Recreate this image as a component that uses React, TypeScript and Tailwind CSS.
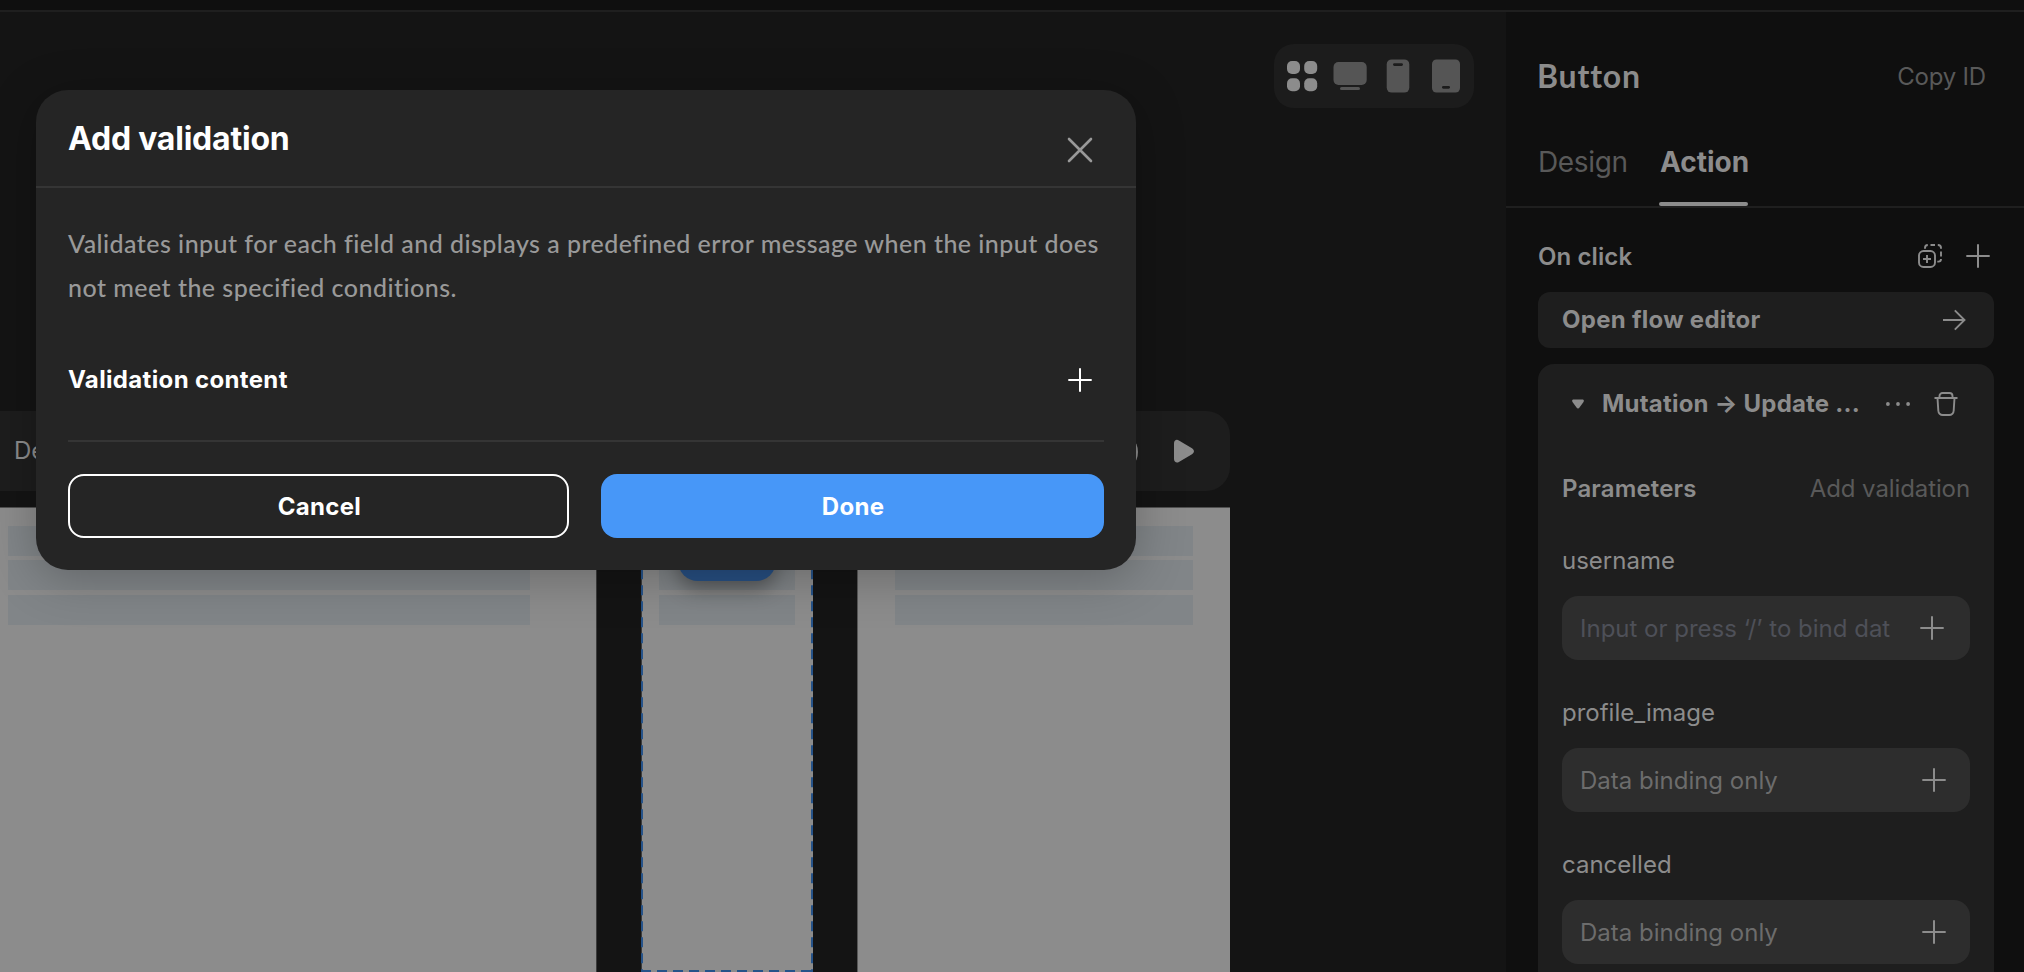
import React from "react";

function Plus({ className = "" }: { className?: string }) {
  return (
    <svg viewBox="0 0 24 24" className={`size-6 shrink-0 ${className}`} fill="none" stroke="currentColor" strokeWidth="2">
      <path d="M12 0.3v23.4M0.3 12h23.4" />
    </svg>
  );
}

function ViewSwitcher() {
  return (
    <div className="flex h-16 w-[200px] items-center gap-4 rounded-[20px] bg-[#1c1c1c] px-3 text-[#555555]">
      <svg viewBox="0 0 32 32" className="size-8 text-[#8c8c8c]" fill="currentColor">
        <rect x="1" y="1" width="13" height="13" rx="5" />
        <rect x="18.2" y="1" width="13" height="13" rx="5" />
        <rect x="1" y="18.2" width="13" height="13" rx="5" />
        <rect x="18.2" y="18.2" width="13" height="13" rx="5" />
      </svg>
      <svg viewBox="0 0 32 32" className="size-8 overflow-visible" fill="currentColor">
        <rect x="-0.5" y="2" width="33.2" height="23" rx="5" />
        <rect x="6" y="27" width="20" height="3" rx="1.5" />
      </svg>
      <svg viewBox="0 0 32 32" className="size-8 overflow-visible" fill="currentColor">
        <rect x="4.7" y="-0.6" width="22.6" height="33.2" rx="5" />
        <rect x="11" y="3.2" width="10" height="2.8" rx="1.4" fill="#1c1c1c" />
      </svg>
      <svg viewBox="0 0 32 32" className="size-8 overflow-visible" fill="currentColor">
        <rect x="2" y="-0.6" width="28" height="33.2" rx="4.5" />
        <rect x="12" y="26" width="8" height="2.7" rx="1.35" fill="#1c1c1c" />
      </svg>
    </div>
  );
}

function Stripes() {
  return (
    <div className="flex flex-col gap-[4.6px]">
      <div className="h-[29.8px] bg-[#818588]" />
      <div className="h-[29.8px] bg-[#818588]" />
      <div className="h-[29.8px] bg-[#818588]" />
    </div>
  );
}

function Canvas() {
  return (
    <main className="flex min-w-0 flex-1 flex-col bg-[#141414]">
      <div className="flex justify-end pt-8 pr-8">
        <ViewSwitcher />
      </div>
      <div className="mt-[303px] flex h-20 w-[1230px] shrink-0 items-center rounded-r-3xl bg-[#1d1d1d] pr-[34px] pl-[14px] text-[#8c8c8c]">
        <span className="text-2xl">Desktop</span>
        <svg viewBox="0 0 40 40" className="ml-auto size-10" fill="currentColor">
          <circle cx="20" cy="21" r="20" />
        </svg>
        <svg viewBox="0 0 24 24" className="ml-[34px] size-6" fill="currentColor">
          <path d="M2 4.4C2 1.2 4.6 0 6.9 1.4L20 9.200c2.600 1.600 2.600 4.400 0 6L6.900 23C4.600 24.400 2 23 2 20Z" />
        </svg>
      </div>
      <div className="mt-4 flex h-[465px] shrink-0">
        <div className="w-[597px] border-t border-r border-t-[#505050] border-r-[#3c3c3c] bg-[#8c8c8c] pt-[18px] pr-[66px] pl-2">
          <Stripes />
        </div>
        <div className="relative ml-[44px] w-[172px] border-t border-t-[#505050] border-l border-l-[#3c3c3c] bg-[#8c8c8c] pt-[18px] pr-[18px] pl-[17px]">
          <Stripes />
          <div className="absolute top-[9px] left-[36px] h-16 w-[98px] rounded-[20px] bg-[#274f82] shadow-[0_8px_20px_rgba(0,0,0,0.35)]" />
          <svg viewBox="0 0 172 465" className="absolute top-[-1px] left-[-1px] h-[465px] w-[172px] overflow-visible" stroke="#265389" strokeWidth="2" strokeDasharray="10 6">
            <path d="M1 62.300V465" />
            <path d="M171 62.300V465" />
            <path d="M0 464H172" />
          </svg>
        </div>
        <div className="ml-[44px] w-[373px] border-t border-l border-t-[#505050] border-l-[#585858] bg-[#8c8c8c] pt-[18px] pr-[37px] pl-[37px]">
          <Stripes />
        </div>
      </div>
    </main>
  );
}

function Field({ label, placeholder, input }: { label: string; placeholder: string; input?: boolean }) {
  return (
    <div className="flex flex-col">
      <div className="h-16 text-2xl leading-[58px]">{label}</div>
      <div className={input
        ? "flex h-16 items-center justify-between rounded-2xl bg-[#2d2d2d] pr-[26px] pl-[18px] text-2xl text-[#4e5058]"
        : "flex h-16 items-center justify-between rounded-2xl bg-[#2d2d2d] pr-6 pl-[18px] text-2xl text-[#6c6c6c]"}>
        <span className="pt-0.5 whitespace-nowrap">{placeholder}</span>
        <Plus className="text-[#8c8c8c]" />
      </div>
    </div>
  );
}

function Sidebar() {
  return (
    <aside className="flex w-[518px] shrink-0 flex-col overflow-hidden bg-[#0f0f0f] text-[#8c8c8c]">
      <div className="flex h-32 shrink-0 items-center justify-between pr-[38px] pl-[31px]">
        <h2 className="font-['Lato'] text-[32px] font-bold tracking-[0.8px]">Button</h2>
        <span className="pt-0.5 text-2xl tracking-[-0.2px] text-[#595959]">Copy ID</span>
      </div>
      <div className="flex h-[68px] shrink-0 gap-8 border-b-2 border-[#1f1f1f] pl-8 text-[28px] leading-[44px]">
        <span className="w-[89px] tracking-[-0.35px] text-[#595959]">Design</span>
        <div className="flex w-[89px] flex-col justify-between font-bold">
          <span className="pl-px">Action</span>
          <span className="h-1 rounded-full bg-[#8c8c8c]" />
        </div>
      </div>
      <div className="flex min-h-0 flex-1 flex-col pr-[30px] pl-8">
        <div className="flex h-[84px] shrink-0 items-center pt-3 pr-1">
          <span className="pt-0.5 text-2xl font-semibold tracking-[0.1px]">On click</span>
          <svg viewBox="0 0 24 24" className="ml-auto size-6" fill="none" stroke="currentColor" strokeWidth="1.9">
            <rect x="1" y="7" width="16" height="16" rx="4.5" />
            <path d="M9 11v8M5 15h8" />
            <path d="M7 4.700V4a3 3 0 0 1 2.800-3M12.500 1h4.500M19.800 1H20a3 3 0 0 1 3 3v0.700M23 7.500v5M23 15v0a2.600 2.600 0 0 1-2.600 2.600H19.300" />
          </svg>
          <Plus className="ml-6" />
        </div>
        <div className="flex h-14 shrink-0 items-center justify-between rounded-xl bg-[#1e1e1e] pr-7 pl-6">
          <span className="text-2xl font-bold tracking-[0.28px]">Open flow editor</span>
          <svg viewBox="0 0 24 24" className="size-6" fill="none" stroke="currentColor" strokeWidth="1.900">
            <path d="M1 12h21.500M12.800 2.400L22.500 12L12.800 21.600" />
          </svg>
        </div>
        <section className="mt-4 shrink-0 rounded-2xl bg-[#1e1e1e] px-6">
          <div className="flex h-20 items-center pr-3 pl-[10px]">
            <svg viewBox="0 0 12 10" className="h-[10px] w-3" fill="currentColor">
              <path d="M1.500 0.500H10.500C11.800 0.500 12.300 1.900 11.500 2.900L7.500 8.500C6.700 9.700 5.300 9.700 4.500 8.500L0.500 2.900C-0.300 1.900 0.200 0.500 1.500 0.500Z" />
            </svg>
            <span className="ml-[18px] text-2xl font-bold tracking-[0.2px] whitespace-nowrap">Mutation → Update ...</span>
            <svg viewBox="0 0 24 24" className="ml-auto size-6" fill="currentColor">
              <circle cx="1.900" cy="12" r="1.900" />
              <circle cx="12" cy="12" r="1.900" />
              <circle cx="22.100" cy="12" r="1.900" />
            </svg>
            <svg viewBox="0 0 24 24" className="ml-6 size-6" fill="none" stroke="currentColor" strokeWidth="1.900">
              <path d="M0.500 6H23.500M5.500 6V4a3 3 0 0 1 3-3h7a3 3 0 0 1 3 3v2M3.500 6l0.800 12.600A4.500 4.500 0 0 0 8.800 23h6.400a4.500 4.500 0 0 0 4.500-4.400L20.500 6" />
            </svg>
          </div>
          <div className="flex h-[88px] items-center justify-between pt-0.5 text-2xl">
            <span className="font-semibold tracking-[0.15px]">Parameters</span>
            <span className="tracking-[-0.1px] text-[#595959]">Add validation</span>
          </div>
          <div className="flex flex-col gap-6">
            <Field label="username" placeholder="Input or press ‘/’ to bind dat" input />
            <Field label="profile_image" placeholder="Data binding only" />
            <Field label="cancelled" placeholder="Data binding only" />
          </div>
          <div className="h-10" />
        </section>
      </div>
    </aside>
  );
}

function ValidationDialog() {
  return (
    <div role="dialog" className="absolute top-[90px] left-9 flex h-[480px] w-[1100px] flex-col rounded-[32px] bg-[#252525] text-white shadow-[0_8px_48px_rgba(0,0,0,0.25)]">
      <header className="flex h-[98px] items-center justify-between border-b-2 border-[#353535] px-8">
        <h1 className="pt-0.5 text-[32px] font-bold tracking-[-0.22px]">Add validation</h1>
        <svg viewBox="0 0 48 48" className="mt-6 size-12" fill="none" stroke="#999999" strokeWidth="2.600" strokeLinecap="round">
          <path d="M13 13L35 35M35 13L13 35" />
        </svg>
      </header>
      <div className="flex flex-1 flex-col px-8 pt-8">
        <p className="pt-px font-['Lato'] text-[25px] leading-[44px] font-medium tracking-[0.46px] whitespace-nowrap text-[#999999]">
          Validates input for each field and displays a predefined error message when the input does
          <br />
          not meet the specified conditions.
        </p>
        <div className="mt-[23px] flex h-24 items-center justify-between pr-3">
          <span className="text-2xl font-bold tracking-[0.35px]">Validation content</span>
          <Plus />
        </div>
        <div className="mt-3 h-0.5 bg-[#353535]" />
        <div className="mt-8 flex gap-8 text-2xl font-bold tracking-[0.3px]">
          <button className="h-16 w-[501px] rounded-2xl border-2 border-white pt-0.5 pl-0.5">Cancel</button>
          <button className="h-16 w-[503px] rounded-2xl bg-[#4797f8] pt-0.5 pl-px">Done</button>
        </div>
      </div>
    </div>
  );
}

export default function App() {
  return (
    <div className="relative flex h-[972px] w-[2024px] flex-col overflow-hidden bg-[#0f0f0f] font-['Inter',sans-serif]">
      <div className="h-3 shrink-0 border-b-2 border-[#1f1f1f]" />
      <div className="flex h-[960px] overflow-hidden">
        <Canvas />
        <Sidebar />
      </div>
      <ValidationDialog />
    </div>
  );
}
